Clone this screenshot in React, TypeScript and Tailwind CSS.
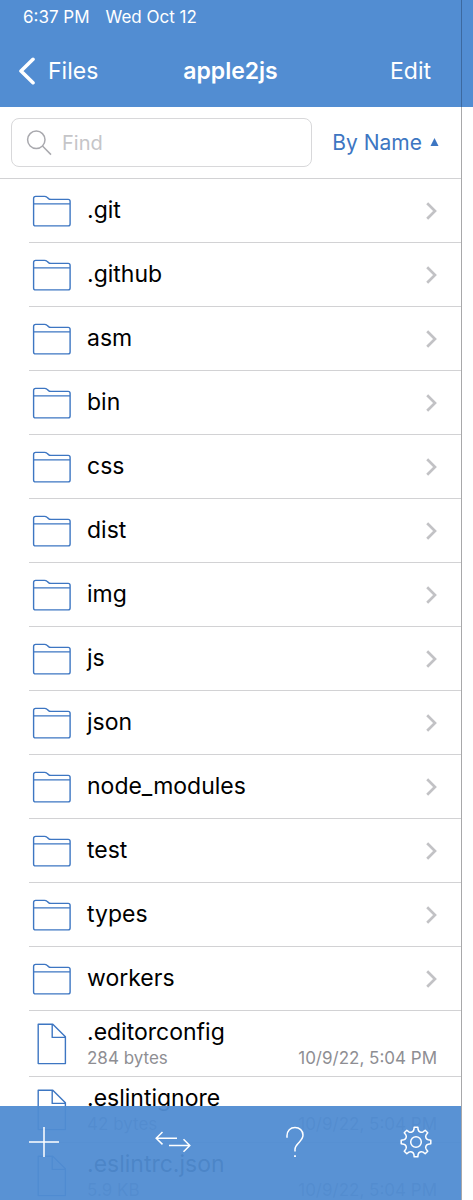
import React, { useState } from 'react';

type Entry = {
  name: string;
  size?: string;
  modified?: string;
};

const folders: Entry[] = [
  { name: '.git' },
  { name: '.github' },
  { name: 'asm' },
  { name: 'bin' },
  { name: 'css' },
  { name: 'dist' },
  { name: 'img' },
  { name: 'js' },
  { name: 'json' },
  { name: 'node_modules' },
  { name: 'test' },
  { name: 'types' },
  { name: 'workers' },
];

const files: Entry[] = [
  { name: '.editorconfig', size: '284 bytes', modified: '10/9/22, 5:04 PM' },
  { name: '.eslintignore', size: '42 bytes', modified: '10/9/22, 5:04 PM' },
  { name: '.eslintrc.json', size: '5.9 KB', modified: '10/9/22, 5:04 PM' },
];

const BackIcon = () => (
  <svg width="18" height="28" viewBox="0 0 18 28" fill="none" stroke="currentColor" strokeWidth="3.6" strokeLinecap="round" strokeLinejoin="round">
    <path d="M15 2.3 3 14l12 11.7" />
  </svg>
);

const SearchIcon = () => (
  <svg width="26" height="26" viewBox="0 0 26 26" fill="none" stroke="#a9a9ae" strokeWidth="1.5" className="pointer-events-none absolute left-[15px]">
    <circle cx="10.3" cy="9.8" r="8.7" />
    <path d="M16.5 16 25 24.6" />
  </svg>
);

const FolderIcon = () => (
  <svg width="40" height="32" viewBox="0 0 40 32" fill="none" stroke="#3d76c2" strokeWidth="1.4" strokeLinejoin="round">
    <path d="M1.6 28.9V3.4Q1.6 1.4 3.6 1.4H12.5Q14 1.4 15 2.3L16.3 3.4Q17.3 4.4 18.8 4.4H36.1Q38.1 4.4 38.1 6.4V28.9Q38.1 30.9 36.1 30.9H3.6Q1.6 30.9 1.6 28.9M1.6 8.9H38.1" />
  </svg>
);

const FileIcon = () => (
  <svg width="30" height="42" viewBox="0 0 30 42" fill="none" stroke="#3d76c2" strokeWidth="1.4" strokeLinejoin="round">
    <path d="M1.2 1.2H15.8L28.4 13.8V40.6H1.2ZM15.2 1.2V14.4H28.4" />
  </svg>
);

const ChevronIcon = () => (
  <svg width="11" height="18" viewBox="0 0 11 18" fill="none" stroke="#c2c2c5" strokeWidth="2.7">
    <path d="M1.2 1.2 9 9l-7.8 7.8" />
  </svg>
);

const PlusIcon = () => (
  <svg width="30" height="30" viewBox="0 0 30 30" fill="none" stroke="currentColor" strokeWidth="1.5">
    <path d="M15 0V30M0 15H30" />
  </svg>
);

const TransferIcon = () => (
  <svg width="36" height="22" viewBox="0 0 36 22" fill="none" stroke="currentColor" strokeWidth="1.5">
    <path d="M7.5 1 1.2 7.2 7.5 13.4M1.2 7.2H22M28.5 8.2 34.8 14.5 28.5 20.8M34.8 14.5H14" />
  </svg>
);

const HelpIcon = () => (
  <svg width="18" height="32" viewBox="0 0 18 32" fill="none" stroke="currentColor" strokeWidth="1.5">
    <path d="M1 11.8V9.8C1 4.8 4.4 1.5 9 1.5S17 4.7 17 9C17 12.4 15 14.3 12.8 16.7C10.5 19.2 9 20.6 9 23.2V25.4" />
    <path d="M8.1 30.2H9.9" strokeWidth="1.8" />
  </svg>
);

const gearPoint = (radius: number, degrees: number) => {
  const angle = (degrees * Math.PI) / 180;
  return `${(16 + radius * Math.sin(angle)).toFixed(2)} ${(16 - radius * Math.cos(angle)).toFixed(2)}`;
};

// Eight teeth, each followed by a rounded valley
const gearPath = [0, 45, 90, 135, 180, 225, 270, 315]
  .map((a, i) =>
    [
      `${i === 0 ? 'M' : 'L'}${gearPoint(14.9, a - 7)}`,
      `L${gearPoint(14.9, a + 7)}`,
      `L${gearPoint(12.4, a + 10)}`,
      `C${gearPoint(10.4, a + 15)} ${gearPoint(10.4, a + 30)} ${gearPoint(12.4, a + 35)}`,
    ].join('')
  )
  .join('') + 'Z';

const GearIcon = () => (
  <svg width="32" height="32" viewBox="0 0 32 32" fill="none" stroke="currentColor" strokeWidth="1.5" strokeLinejoin="round">
    <path d={gearPath} />
    <circle cx="16" cy="16" r="5.3" />
  </svg>
);

const App: React.FC = () => {
  const [query, setQuery] = useState('');
  const [ascending, setAscending] = useState(true);

  const matches = (entry: Entry) => entry.name.toLowerCase().includes(query.toLowerCase());
  const arrange = (entries: Entry[]) => {
    const found = entries.filter(matches);
    return ascending ? found : found.reverse();
  };

  return (
    <div className="flex h-screen overflow-hidden bg-white font-['Inter','Liberation_Sans',sans-serif] text-black">
      <div className="relative flex min-w-0 flex-1 flex-col overflow-hidden">
        <header className="shrink-0 bg-[#528dd2] text-white">
          <div className="flex gap-4 px-[23px] pt-[7px] text-[17px] leading-5">
            <span>6:37 PM</span>
            <span>Wed Oct 12</span>
          </div>
          <div className="grid h-20 grid-cols-[1fr_auto_1fr] items-center px-[18px] pt-2 text-[23px]">
            <button type="button" className="flex items-center gap-3 justify-self-start">
              <BackIcon />
              Files
            </button>
            <h1 className="font-semibold">apple2js</h1>
            <button type="button" className="mr-3 justify-self-end">Edit</button>
          </div>
        </header>

        <div className="flex h-[72px] shrink-0 items-center border-b border-[#d2d2d4] pr-[22px] pl-[11px]">
          <label className="relative flex flex-1 items-center">
            <SearchIcon />
            <input
              type="text"
              aria-label="Find"
              placeholder="Find"
              value={query}
              onChange={(e) => setQuery(e.target.value)}
              className="h-[49px] w-full min-w-0 rounded-lg border border-[#d8d8da] pr-3 pl-[50px] text-xl placeholder:text-[#c5c5c8] focus:outline-none"
            />
          </label>
          <button
            type="button"
            onClick={() => setAscending(!ascending)}
            className="ml-5 flex items-center gap-2 text-[21px] text-[#3d76c2]"
          >
            By Name
            <svg width="9" height="10" viewBox="0 0 9 10" fill="currentColor" className={ascending ? '' : 'rotate-180'}>
              <path d="M4.5 0 8.5 8H.5Z" />
            </svg>
          </button>
        </div>

        <ul className="shrink-0">
          {arrange(folders).map((folder) => (
            <li key={folder.name} className="ml-[29px] border-b border-[#d2d2d4]">
              <button type="button" className="flex h-[63px] w-full items-center pr-6 pl-[3px] text-left">
                <FolderIcon />
                <span className="ml-[15px] flex-1 text-[23px]">{folder.name}</span>
                <ChevronIcon />
              </button>
            </li>
          ))}
          {arrange(files).map((file) => (
            <li key={file.name} className="ml-[29px] border-b border-[#d2d2d4]">
              <button type="button" className="flex h-[65px] w-full items-center pr-6 pl-2 text-left">
                <FileIcon />
                <span className="ml-5 flex-1">
                  <span className="block pt-px text-[23px] leading-7">{file.name}</span>
                  <span className="flex justify-between text-[17px] leading-6 text-[#8e8e93]">
                    <span>{file.size}</span>
                    <span>{file.modified}</span>
                  </span>
                </span>
              </button>
            </li>
          ))}
        </ul>

        <nav className="absolute inset-x-0 bottom-0 flex h-[94px] items-start justify-between bg-[#508cd2]/95 px-[29px] pt-5 text-white">
          <button type="button" aria-label="Add" className="flex h-8 items-center"><PlusIcon /></button>
          <button type="button" aria-label="Transfer" className="flex h-8 items-center"><TransferIcon /></button>
          <button type="button" aria-label="Help" className="flex h-8 items-center"><HelpIcon /></button>
          <button type="button" aria-label="Settings" className="flex h-8 items-center"><GearIcon /></button>
        </nav>
      </div>

      <div className="w-3 shrink-0 border-l border-[#a8a8aa]">
        <div className="-ml-px h-[107px] border-l border-[#3c699f] bg-[#528dd2]" />
      </div>
    </div>
  );
};

export default App;
